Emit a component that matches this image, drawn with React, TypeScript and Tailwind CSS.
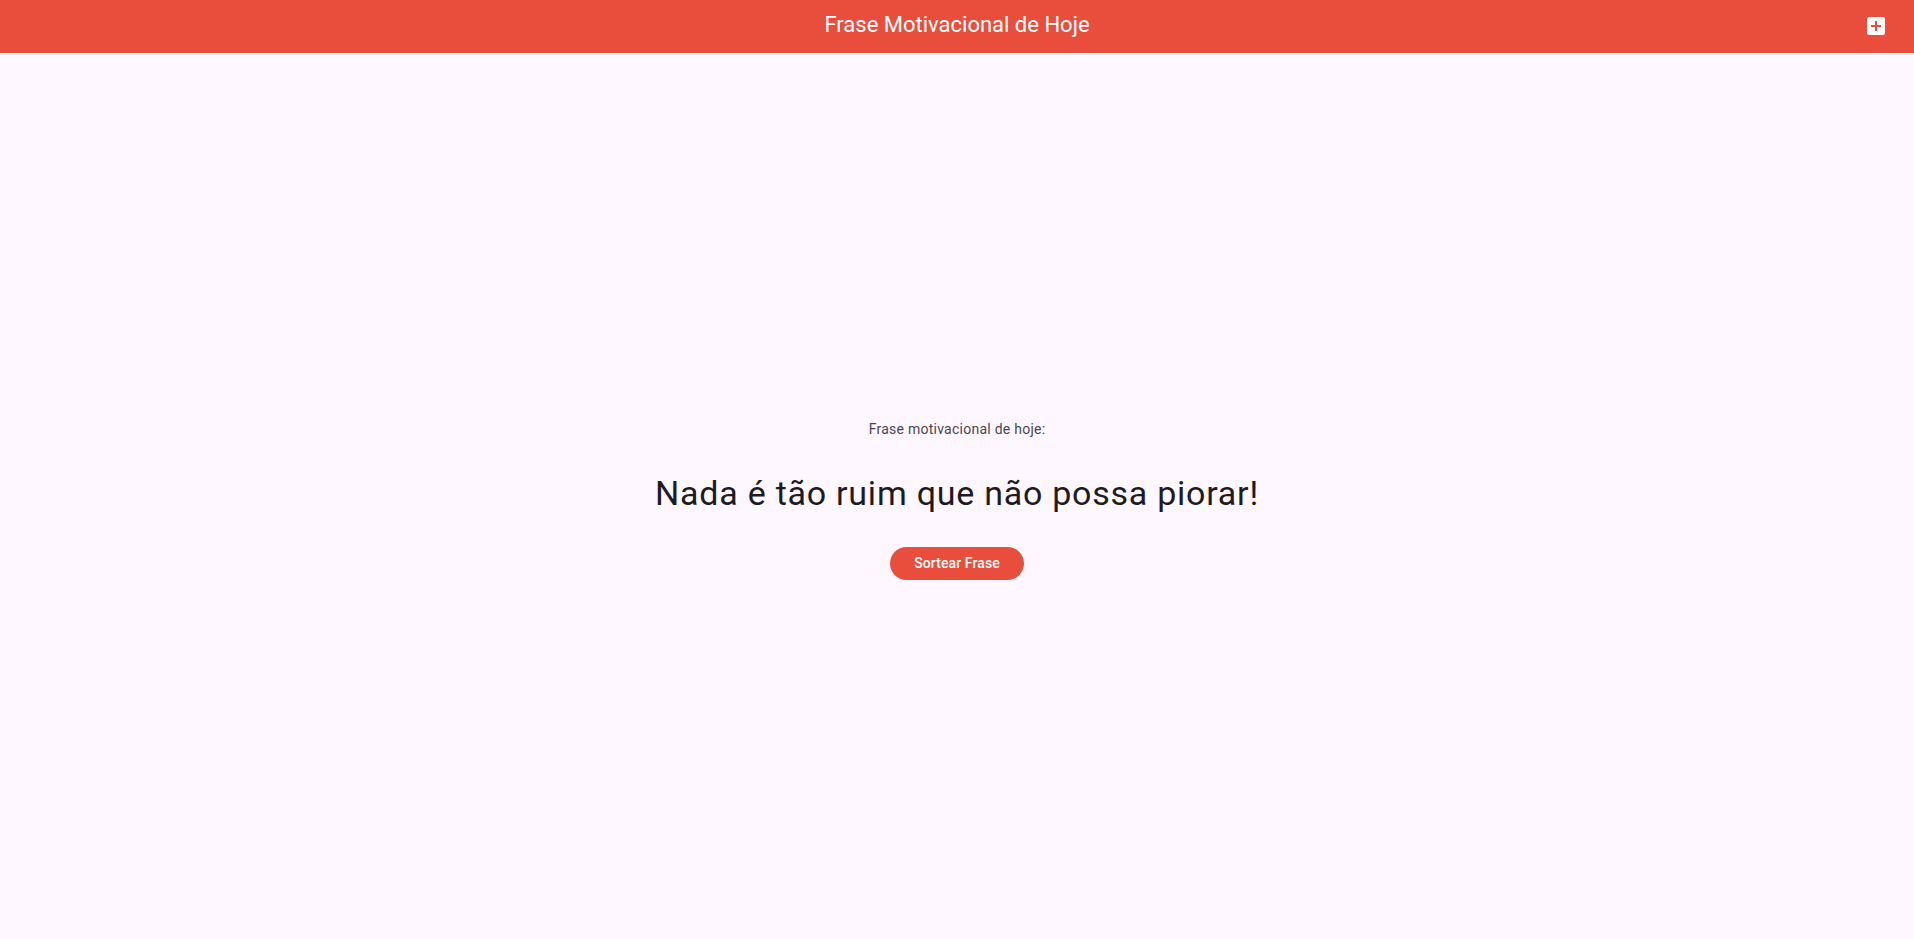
import React from "react";

export default function App() {
  return (
    <div className="flex h-[939px] w-full flex-col bg-[#fef7ff]" style={{ fontFamily: "Roboto, 'Noto Sans', sans-serif" }}>
      <header className="relative flex h-[53px] shrink-0 items-center justify-center bg-[#e94e3c] pb-[3px]">
        <h1 className="text-[22px] font-normal leading-[28px] text-white">Frase Motivacional de Hoje</h1>
        <button className="absolute right-[26px] top-[14px] flex h-6 w-6 items-center justify-center">
          <svg viewBox="0 0 24 24" className="h-6 w-6" fill="#ffffff">
            <path d="M19 3H5c-1.11 0-2 .9-2 2v14c0 1.1.89 2 2 2h14c1.1 0 2-.9 2-2V5c0-1.1-.9-2-2-2zm-2 10h-4v4h-2v-4H7v-2h4V7h2v4h4v2z" />
          </svg>
        </button>
      </header>
      <main className="flex flex-1 flex-col items-center justify-center pt-[6px]">
        <p className="text-[14px] leading-[20px] tracking-[0.25px] text-[#49454f]">Frase motivacional de hoje:</p>
        <p className="mt-[32px] text-[34px] leading-[44px] tracking-[0.75px] text-[#1d1b20]">Nada é tão ruim que não possa piorar!</p>
        <button className="mt-[32px] flex h-[33px] items-center rounded-full bg-[#e94e3c] px-[24px] text-[14px] font-medium tracking-[0.1px] text-white">
          Sortear Frase
        </button>
      </main>
    </div>
  );
}
